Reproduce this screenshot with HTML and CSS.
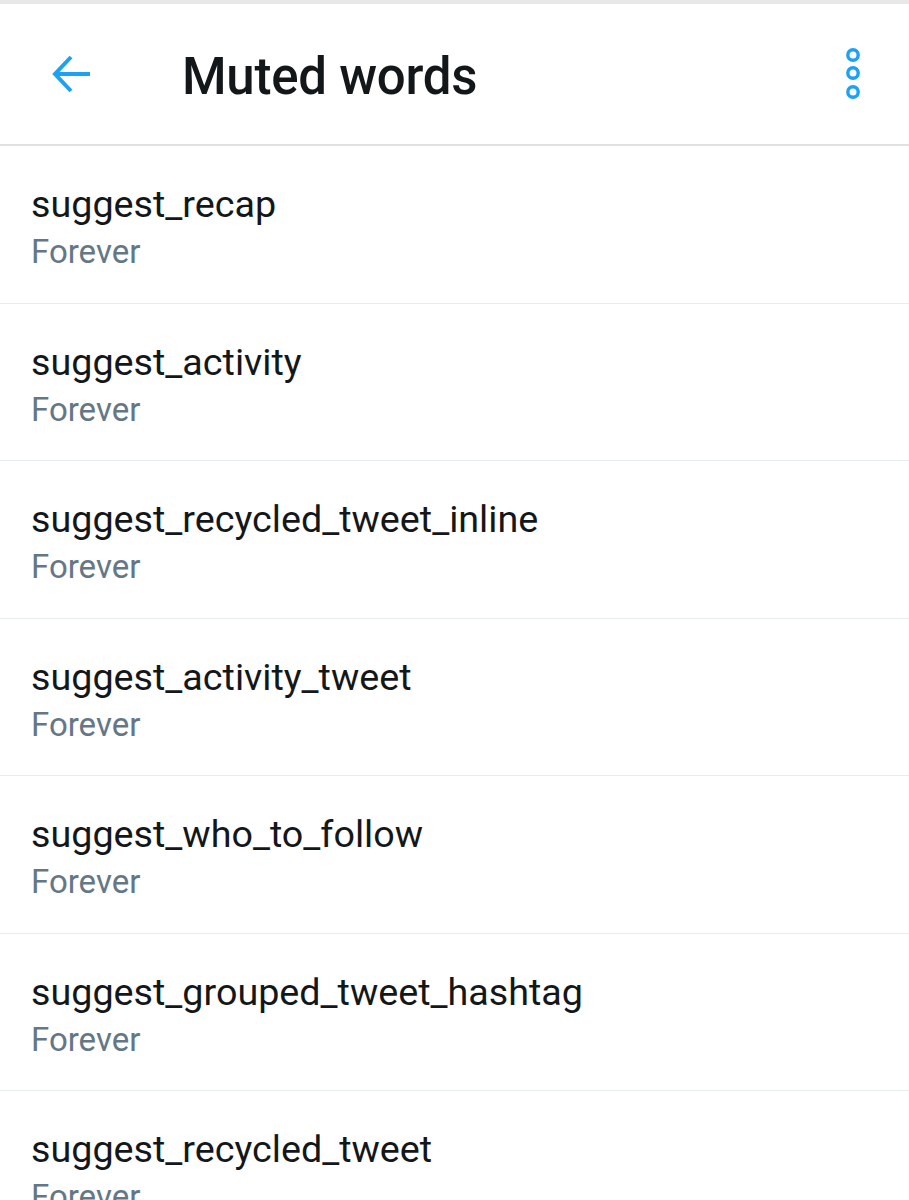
FILE: index.html
```html
<!DOCTYPE html>
<html lang="en">
<head>
<meta charset="utf-8">
<link rel="stylesheet" href="styles.css">
<title>Muted words</title>
</head>
<body>
<div id="statusbar"></div>
<div id="header">
  <a class="back" href="#">
    <svg width="48" height="48" viewBox="0 0 48 48">
      <path d="M43 24H8M24 7L8 24l16 17" fill="none" stroke="#1da1f2" stroke-width="4" stroke-linecap="butt" stroke-linejoin="miter"/>
    </svg>
  </a>
  <h1>Muted words</h1>
  <a class="more" href="#">
    <svg width="20" height="56" viewBox="0 0 20 56">
      <circle cx="10" cy="9" r="5.2" fill="none" stroke="#1da1f2" stroke-width="3.4"/>
      <circle cx="10" cy="27" r="5.2" fill="none" stroke="#1da1f2" stroke-width="3.4"/>
      <circle cx="10" cy="46" r="5.2" fill="none" stroke="#1da1f2" stroke-width="3.4"/>
    </svg>
  </a>
</div>
<ul id="words">
  <li><div class="word">suggest_recap</div><div class="duration">Forever</div></li>
  <li><div class="word">suggest_activity</div><div class="duration">Forever</div></li>
  <li><div class="word">suggest_recycled_tweet_inline</div><div class="duration">Forever</div></li>
  <li><div class="word">suggest_activity_tweet</div><div class="duration">Forever</div></li>
  <li><div class="word">suggest_who_to_follow</div><div class="duration">Forever</div></li>
  <li><div class="word">suggest_grouped_tweet_hashtag</div><div class="duration">Forever</div></li>
  <li><div class="word">suggest_recycled_tweet</div><div class="duration">Forever</div></li>
</ul>
</body>
</html>
```

FILE: styles.css
```css
body {
  margin: 0;
  padding: 0;
  background: #fff;
  font-family: Roboto, "Liberation Sans", sans-serif;
  color: #14171a;
  overflow: hidden;
}
#statusbar {
  height: 4px;
  background: #e8e8e8;
}
#header {
  display: flex;
  align-items: center;
  height: 140px;
  border-bottom: 2px solid #e1e1e1;
}
#header a { display: block; line-height: 0; }
.back { margin-left: 47px; }
#header h1 {
  flex: 1;
  margin: 4px 0 0 87px;
  font-size: 51px;
  font-weight: 500;
  letter-spacing: -0.25px;
  color: #14171a;
}
.more { margin-right: 46px; }
#words {
  list-style: none;
  margin: 0;
  padding: 0;
}
#words li {
  box-sizing: border-box;
  height: 157.5px;
  padding: 32px 0 0 31px;
  border-bottom: 1px solid #e6ecf0;
}
.word {
  font-size: 37.7px;
  line-height: 52px;
}
.duration {
  margin-top: 2px;
  font-size: 33px;
  line-height: 40px;
  color: #657786;
}
```
